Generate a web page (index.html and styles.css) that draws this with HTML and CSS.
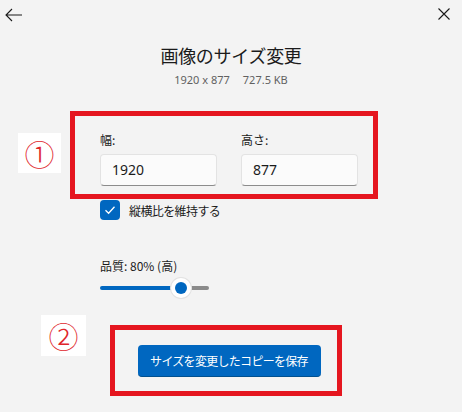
FILE: index.html
```html
<!DOCTYPE html>
<html lang="ja">
<head>
<meta charset="utf-8">
<title>画像のサイズ変更</title>
<link rel="stylesheet" href="styles.css">
</head>
<body>
<div class="window">
  <div class="topbar">
    <svg class="back" width="18" height="14" viewBox="0 0 18 14"><path d="M1 7H17M7 1L1 7L7 13" fill="none" stroke="#1a1a1a" stroke-width="1.1"/></svg>
    <svg class="close" width="12" height="12" viewBox="0 0 12 12"><path d="M0.5 0.5L11.5 11.5M11.5 0.5L0.5 11.5" fill="none" stroke="#1a1a1a" stroke-width="1.1"/></svg>
  </div>
  <div class="header">
    <h1 class="title">画像のサイズ変更</h1>
    <div class="meta">1920 x 877<span class="gap"></span>727.5 KB</div>
  </div>
  <div class="form">
    <div class="fields">
      <div class="field">
        <div class="label">幅:</div>
        <div class="input">1920</div>
      </div>
      <div class="field">
        <div class="label">高さ:</div>
        <div class="input">877</div>
      </div>
    </div>
    <div class="check-row">
      <span class="checkbox"><svg width="12" height="10" viewBox="0 0 12 10"><path d="M1.5 5.2L4.6 8.2L10.5 1.8" fill="none" stroke="#fff" stroke-width="1.3"/></svg></span>
      <span class="check-text">縦横比を維持する</span>
    </div>
    <div class="quality-label">品質: 80% (高)</div>
    <div class="slider">
      <div class="track-fill"></div>
      <div class="track-rest"></div>
      <div class="thumb"><div class="thumb-dot"></div></div>
    </div>
    <div class="btn-row">
      <button class="primary">サイズを変更したコピーを保存</button>
    </div>
  </div>

  <div class="mark mark-box1"></div>
  <div class="mark mark-box2"></div>
  <div class="badge badge1">①</div>
  <div class="badge badge2">②</div>
</div>
</body>
</html>
```
FILE: styles.css
```css
* { box-sizing: border-box; }
html, body { margin: 0; padding: 0; }
body {
  background: #f3f3f3;
  font-family: "Noto Sans", "Noto Sans CJK JP", sans-serif;
  color: #1b1b1b;
}
.window {
  position: relative;
  width: 462px;
  height: 412px;
  overflow: hidden;
}
.topbar {
  height: 30px;
  display: flex;
  justify-content: space-between;
  align-items: flex-start;
  padding: 0 12px 0 5px;
}
.back { margin-top: 8px; }
.close { margin-top: 8px; }

.header { text-align: center; }
.title {
  margin: 13px 0 0;
  font-family: "Noto Sans CJK JP", sans-serif;
  font-weight: 400;
  font-size: 18px;
  line-height: 24px;
  letter-spacing: -0.3px;
  color: #1b1b1b;
}
.meta {
  margin-top: 5px;
  font-size: 11px;
  line-height: 16px;
  color: #616161;
}
.meta .gap { display: inline-block; width: 13px; }

.form {
  margin-left: 100px;
  width: 258px;
  padding-top: 44px;
}
.fields {
  display: flex;
  gap: 24px;
}
.field { width: 117px; }
.label {
  font-family: "Noto Sans CJK JP", sans-serif;
  font-size: 12px;
  line-height: 16px;
  color: #1b1b1b;
}
.input {
  margin-top: 6px;
  height: 32px;
  background: #fbfbfb;
  border: 1px solid #e3e3e3;
  border-bottom-color: #8c8c8c;
  border-radius: 4px;
  padding-left: 11px;
  font-size: 14px;
  line-height: 30px;
  color: #1b1b1b;
}
.check-row {
  margin-top: 14px;
  display: flex;
  align-items: center;
  gap: 9px;
  height: 20px;
}
.checkbox {
  width: 20px;
  height: 20px;
  background: #0067c0;
  border-radius: 4px;
  display: flex;
  align-items: center;
  justify-content: center;
}
.check-text {
  font-family: "Noto Sans CJK JP", sans-serif;
  font-size: 12px;
  letter-spacing: -0.6px;
  color: #1b1b1b;
}
.quality-label {
  margin-top: 38px;
  font-family: "Noto Sans CJK JP", sans-serif;
  font-size: 12px;
  line-height: 16px;
}
.slider {
  position: relative;
  margin-top: 4px;
  width: 109px;
  height: 20px;
  display: flex;
  align-items: center;
}
.track-fill {
  width: 81px;
  height: 4px;
  background: #0067c0;
  border-radius: 2px 0 0 2px;
}
.track-rest {
  flex: 1;
  height: 4px;
  background: #8a8a8a;
  border-radius: 0 2px 2px 0;
}
.thumb {
  position: absolute;
  left: 71px;
  top: 0;
  width: 20px;
  height: 20px;
  border-radius: 50%;
  background: #fff;
  box-shadow: 0 0 0 1px #e2e2e2;
  display: flex;
  align-items: center;
  justify-content: center;
}
.thumb-dot {
  width: 12px;
  height: 12px;
  border-radius: 50%;
  background: #0067c0;
}
.btn-row {
  margin-top: 47px;
  display: flex;
  justify-content: center;
}
.primary {
  width: 183px;
  height: 32px;
  border: none;
  border-radius: 4px;
  background: #0067c0;
  color: #fff;
  font-family: "Noto Sans CJK JP", sans-serif;
  font-size: 12px;
  letter-spacing: -0.7px;
  padding: 0;
  border-bottom: 1px solid #00508f;
}

/* annotation overlays */
.mark {
  position: absolute;
  border: 5px solid #e5161f;
}
.mark-box1 { left: 70px; top: 111px; width: 308px; height: 88px; }
.mark-box2 { left: 110px; top: 325px; width: 232px; height: 71px; }
.badge {
  position: absolute;
  background: #fff;
  color: #e0262b;
  font-family: "Noto Sans CJK JP", serif;
  font-weight: 300;
  font-size: 30px;
  line-height: 40px;
  text-align: center;
}
.badge1 { left: 18px; top: 133px; width: 43px; height: 40px; }
.badge2 { left: 41px; top: 315px; width: 45px; height: 41px; }
```
